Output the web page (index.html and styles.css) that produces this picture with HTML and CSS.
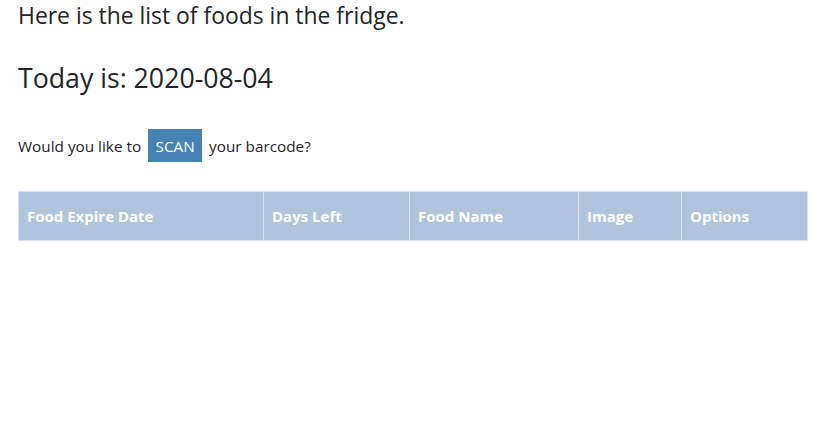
FILE: index.html
```html
<!DOCTYPE html>
<html>
<head>
<meta charset="utf-8">
<link rel="stylesheet" href="styles.css">
</head>
<body>
<div class="page">
  <h4 class="title">Here is the list of foods in the fridge.</h4>
  <h3 class="today">Today is: 2020-08-04</h3>
  <p class="scan-row">Would you like to <button class="scan-btn">SCAN</button> your barcode?</p>
  <table class="foods">
    <thead>
      <tr>
        <th class="c1">Food Expire Date</th>
        <th class="c2">Days Left</th>
        <th class="c3">Food Name</th>
        <th class="c4">Image</th>
        <th class="c5">Options</th>
      </tr>
    </thead>
  </table>
</div>
</body>
</html>
```
FILE: styles.css
```css
html, body {
  margin: 0;
  padding: 0;
  background: #fff;
}
body {
  font-family: "Open Sans", "Noto Sans", sans-serif;
  color: #212529;
}
.page {
  padding: 2px 22px 0 18px;
}
.title {
  font-size: 22.9px;
  font-weight: 400;
  line-height: 28px;
  margin: 0;
}
.today {
  font-size: 26.7px;
  font-weight: 400;
  line-height: 34px;
  margin: 31px 0 0 0;
}
.scan-row {
  font-size: 15.3px;
  margin: 34px 0 0 0;
  display: flex;
  align-items: center;
  gap: 7px;
  height: 33px;
}
.scan-btn {
  background: #4682b4;
  color: #fff;
  border: none;
  font-family: inherit;
  font-size: 15.3px;
  height: 33px;
  width: 54px;
  padding: 0;
}
.foods {
  margin-top: 29px;
  width: 790px;
  border-collapse: collapse;
  table-layout: fixed;
}
.foods th {
  box-sizing: border-box;
  background: #b0c4de;
  color: #fff;
  font-weight: 700;
  font-size: 15px;
  text-align: left;
  height: 49px;
  padding: 0 8px;
  border: 1px solid #dbe3ec;
}
.c1 { width: 245px; }
.c2 { width: 146px; }
.c3 { width: 169px; }
.c4 { width: 103px; }
```
